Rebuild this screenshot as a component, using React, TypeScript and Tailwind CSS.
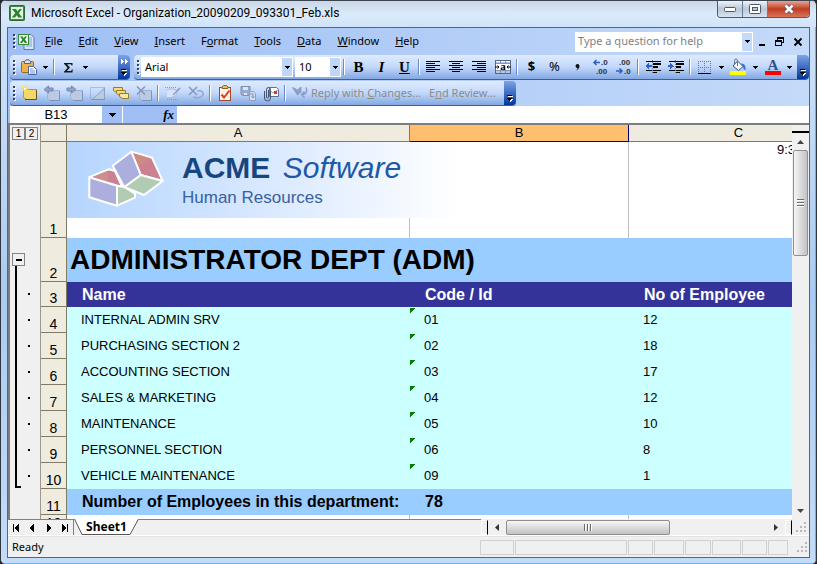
import React from "react";
import clsx from "clsx";

type IconProps = { children: React.ReactNode; w?: number; h?: number; crisp?: boolean };

const menus = [
    ["", "F", "ile"],
    ["", "E", "dit"],
    ["", "V", "iew"],
    ["", "I", "nsert"],
    ["F", "o", "rmat"],
    ["", "T", "ools"],
    ["", "D", "ata"],
    ["", "W", "indow"],
    ["", "H", "elp"],
];

const rows = [
    { n: 4, name: "INTERNAL ADMIN SRV", code: "01", count: 12 },
    { n: 5, name: "PURCHASING SECTION 2", code: "02", count: 18 },
    { n: 6, name: "ACCOUNTING SECTION", code: "03", count: 17 },
    { n: 7, name: "SALES & MARKETING", code: "04", count: 12 },
    { n: 8, name: "MAINTENANCE", code: "05", count: 10 },
    { n: 9, name: "PERSONNEL SECTION", code: "06", count: 8 },
    { n: 10, name: "VEHICLE MAINTENANCE", code: "09", count: 1 },
];

function Icon({ children, w = 16, h = 16, crisp }: IconProps) {
    return (
        <svg width={w} height={h} viewBox={`0 0 ${w} ${h}`} fill="none" shapeRendering={crisp ? "crispEdges" : "auto"} className="overflow-visible" aria-hidden="true">
            {children}
        </svg>
    );
}

function Caret({ className }: { className?: string }) {
    return (
        <svg width="5" height="3" viewBox="0 0 5 3" shapeRendering="crispEdges" className={className} aria-hidden="true">
            <path d="M0 0h5v1h-1v1h-1v1h-1v-1h-1v-1h-1z" fill="#000" />
        </svg>
    );
}

function Tool({ label, children, narrow }: { label: string; children: React.ReactNode; narrow?: boolean }) {
    return (
        <button
            type="button"
            aria-label={label}
            className={clsx("h-6 shrink-0 flex items-center justify-center hover:bg-white/40", narrow ? "w-[11px]" : "w-[23px]")}
        >
            {children}
        </button>
    );
}

function Sep() {
    return <span className="w-[2px] h-4 mx-[2px] shrink-0 bg-[#6a8ccb] border-r border-white" />;
}

function Grip() {
    return (
        <svg width="4" height="15" viewBox="0 0 4 15" shapeRendering="crispEdges" className="shrink-0" aria-hidden="true">
            {[0, 4, 8, 12].map((y) => (
                <g key={y}>
                    <rect x="1" y={y + 1} width="2" height="2" fill="#fff" />
                    <rect x="0" y={y} width="2" height="2" fill="#27417d" />
                </g>
            ))}
        </svg>
    );
}

// dark blue cap at the end of every toolbar
function BarEnd({ more }: { more?: boolean }) {
    return (
        <button
            type="button"
            aria-label="Toolbar options"
            className="w-3 self-stretch shrink-0 ml-auto flex flex-col items-center justify-between pt-1 pb-[3px] rounded-r-sm bg-linear-to-b from-[#7ba4e8] to-[#00359a]"
        >
            {more ? (
                <Icon w={7} h={5} crisp>
                    <path d="M0 0h1v1h1v1h1v1h-1v1h-1v1h-1zM4 0h1v1h1v1h1v1h-1v1h-1v1h-1z" fill="#fff" />
                </Icon>
            ) : (
                <span />
            )}
            <Icon w={6} h={7} crisp>
                <path d="M1 1h5v1h-5zM1 4h5v1h-1v1h-1v1h-1v-1h-1v-1h-1z" fill="#fff" />
                <path d="M0 0h5v1h-5zM0 3h5v1h-1v1h-1v1h-1v-1h-1v-1h-1z" fill="#000" />
            </Icon>
        </button>
    );
}

function Bar({ children, className }: { children: React.ReactNode; className?: string }) {
    return (
        <div
            className={clsx(
                "h-[25px] flex items-center pl-[3px] rounded-sm border-b border-[#3b619c] bg-linear-to-b from-[#dfebfe] via-[#c2d8fa] to-[#84a8e3]",
                className
            )}
        >
            {children}
        </div>
    );
}

function Lines({ xs }: { xs: number[][] }) {
    return (
        <Icon w={15} h={12} crisp>
            {xs.map(([x, w], i) => (
                <rect key={i} x={x} y={i * 2} width={w} height="1" fill="#000" />
            ))}
        </Icon>
    );
}

function ExcelMark() {
    return (
        <Icon>
            <rect x="0.5" y="0.5" width="15" height="15" rx="1" fill="#3c8a41" stroke="#2c6a34" />
            <rect x="2" y="2" width="12" height="12" fill="#e3f3df" />
            <path d="M3 4h4l1.500 2.300L10.500 4H13L9.800 8l3.400 4.500H9.300L7.800 10.300 6 12.500H2.800L6.300 8z" fill="#2f8136" />
        </Icon>
    );
}

function WorkbookMark() {
    return (
        <Icon w={17} h={17}>
            <path d="M6 1.500h7l3 3v12H6z" fill="#d7e5fa" stroke="#5a79b0" />
            <path d="M8 5h6M8 7h6M8 9h6M8 11h6M8 13h6" stroke="#87a3d3" />
            <rect x="0.500" y="1.500" width="10" height="10" fill="#e8f6e4" stroke="#35873c" />
            <path d="M2 3.500h2.500l1.200 1.800L7 3.500h2L6.800 6.500 9.300 10H6.800L5.500 8 4 10H2l2.400-3.500z" fill="#2b7f33" />
        </Icon>
    );
}

// shaded sheet used by the greyed comment buttons
function Note({ children }: { children?: React.ReactNode }) {
    return (
        <Icon>
            <path d="M3.500 5.500h12v10h-9l-3-2z" fill="#bcc9e2" stroke="#a3b2d0" />
            <path d="M6 15.500h9.500V6" stroke="#7f93ba" />
            {children}
        </Icon>
    );
}

function FileToolbar() {
    return (
        <Bar className="w-[120px]">
            <Grip />
            <Tool label="Paste">
                <Icon>
                    <rect x="0.500" y="2.500" width="12" height="11" rx="1" fill="#eeb04a" stroke="#9a6718" />
                    <path d="M3.500 4.500h6V2.500L8 .8H5L3.500 2.500z" fill="#d8dce6" stroke="#5d6679" />
                    <path d="M7.500 7.500h5l3 3v5h-8z" fill="#f4f8ff" stroke="#4a65a0" />
                    <path d="M9 10h3M9 12h5M9 14h5" stroke="#7c95c8" />
                </Icon>
            </Tool>
            <Tool label="Paste options" narrow><Caret /></Tool>
            <Sep />
            <Tool label="AutoSum">
                <Icon w={11} h={11}>
                    <path d="M1 1h8.500v2.500h-1L8 2.200H4L7 5.500 3.800 9H8.200l.6-1.500h1L9.500 10.500H1v-.8L4.600 5.800 1 1.800z" fill="#101820" />
                </Icon>
            </Tool>
            <Tool label="AutoSum options" narrow><Caret /></Tool>
            <BarEnd more />
        </Bar>
    );
}

function Picker({ label, value, className }: { label: string; value: string; className: string }) {
    return (
        <div className={clsx("relative flex h-5", className)}>
            <select aria-label={label} className="w-full h-5 pl-1 pb-px appearance-none bg-white text-[11px] leading-4" defaultValue={value}>
                <option>{value}</option>
            </select>
            <span className="absolute right-px top-px h-[18px] w-[10px] flex items-center justify-center bg-[#c0d6f8] pointer-events-none"><Caret /></span>
        </div>
    );
}

function FormatToolbar() {
    return (
        <Bar className="flex-1">
            <Grip />
            <Picker label="Font" value="Arial" className="w-[152px]" />
            <Picker label="Font size" value="10" className="w-[46px] ml-[2px]" />
            <Sep />
            <div className="flex font-['Liberation_Serif',serif] text-[15px] font-bold">
                <Tool label="Bold">B</Tool>
                <Tool label="Italic"><i>I</i></Tool>
                <Tool label="Underline"><span className="underline">U</span></Tool>
            </div>
            <Sep />
            <Tool label="Align left"><Lines xs={[[0, 14], [0, 9], [0, 14], [0, 9], [0, 14], [0, 9]]} /></Tool>
            <Tool label="Center"><Lines xs={[[0, 14], [3, 8], [0, 14], [3, 8], [0, 14], [3, 8]]} /></Tool>
            <Tool label="Align right"><Lines xs={[[0, 14], [5, 9], [0, 14], [5, 9], [0, 14], [5, 9]]} /></Tool>
            <Tool label="Merge and center">
                <Icon>
                    <rect x="0.500" y="1.500" width="15" height="13" fill="#fff" stroke="#55678a" />
                    <path d="M1 3h14v1.500H1zM1 11.500h14V14H1z" fill="#b9c6de" />
                    <path d="M1 4.500h14M1 11.500h14M5.500 2v2M10.500 2v2M5.500 12v2M10.500 12v2" stroke="#8496b8" />
                    <path d="M0 8h4M2.500 6.500 4 8 2.500 9.500M16 8h-4M13.500 6.500 12 8l1.500 1.500" stroke="#000" />
                    <text x="8" y="11" textAnchor="middle" className="font-['Liberation_Serif',serif] text-[11px] font-bold" fill="#000">a</text>
                </Icon>
            </Tool>
            <Sep />
            <div className="flex text-[13px]">
                <Tool label="Currency"><b>$</b></Tool>
                <Tool label="Percent">%</Tool>
                <Tool label="Comma">
                    <Icon w={5} h={8}><path d="M2.500 1a2 2 0 0 1 2 2C4.500 5 3 7 1 7.500c1-1 1.500-1.600 1.500-2.500A2 2 0 0 1 2.500 1z" fill="#111" /></Icon>
                </Tool>
            </div>
            <Tool label="Increase decimal">
                <Icon>
                    <path d="M7 3.500H1M3.500 1 1 3.500 3.500 6" stroke="#2a62c4" strokeWidth="1.500" />
                    <g className="font-['Liberation_Sans',sans-serif] text-[8px] font-bold" fill="#333">
                        <text x="8" y="6">.0</text>
                        <text x="3" y="15">.00</text>
                    </g>
                </Icon>
            </Tool>
            <Tool label="Decrease decimal">
                <Icon>
                    <path d="M0 12h6M3.500 9.500 6 12l-2.500 2.500" stroke="#2a62c4" strokeWidth="1.500" />
                    <g className="font-['Liberation_Sans',sans-serif] text-[8px] font-bold" fill="#333">
                        <text x="3" y="6">.00</text>
                        <text x="8" y="15">.0</text>
                    </g>
                </Icon>
            </Tool>
            <Sep />
            <Tool label="Decrease indent">
                <Icon crisp>
                    <path d="M1 2h15v1H1zM8 4h8v2H8zM8 7h5v2H8zM1 11h15v1H1zM7 13h5v1H7z" fill="#000" />
                    <path d="M0 7h1V6h1V5h1V4h1v2h3v2H4v2H3V9H2V8H1V7z" fill="#2a62c4" />
                    <path d="M7.500 1v14" stroke="#6f83a8" strokeDasharray="1 1" />
                </Icon>
            </Tool>
            <Tool label="Increase indent">
                <Icon crisp>
                    <path d="M1 2h15v1H1zM8 4h8v2H8zM8 7h5v2H8zM1 11h15v1H1zM7 13h5v1H7z" fill="#000" />
                    <path d="M6 7H5V6H4V5H3V4H2v2H0v2h2v2h1V9h1V8h1z" fill="#2a62c4" />
                    <path d="M7.500 1v14" stroke="#6f83a8" strokeDasharray="1 1" />
                </Icon>
            </Tool>
            <Sep />
            <Tool label="Borders">
                <Icon w={13} h={13} crisp>
                    <path d="M.5 0v12M6.500 0v12M12.500 0v12M0 .5h13M0 6.500h13" stroke="#62789f" strokeDasharray="1 1" />
                    <path d="M0 12h13v1H0z" fill="#000" />
                </Icon>
            </Tool>
            <Tool label="Border options" narrow><Caret /></Tool>
            <Tool label="Fill color">
                <Icon w={17}>
                    <path d="M7.500 2 13 7.500 8.500 11.500 3 7z" fill="#f2f5fb" stroke="#445575" />
                    <path d="M7.500 7V1.500a1.500 1.500 0 0 0-3 0V5" stroke="#6b7690" />
                    <path d="M11 4.500c3 0 5 2 4.500 6.500-1.500 0-2.500-2-2.500-3.500z" fill="#3a6fc8" />
                    <path d="M0 12h16v4H0z" fill="#ff0" />
                </Icon>
            </Tool>
            <Tool label="Fill color options" narrow><Caret /></Tool>
            <Tool label="Font color">
                <Icon>
                    <text x="8" y="11" textAnchor="middle" className="font-['Liberation_Serif',serif] text-[15px] font-bold" fill="#2d4f93">A</text>
                    <path d="M0 12h16v4H0z" fill="#f00" />
                </Icon>
            </Tool>
            <Tool label="Font color options" narrow><Caret /></Tool>
            <BarEnd />
        </Bar>
    );
}

function ReviewToolbar() {
    return (
        <Bar className="w-[506px]">
            <Grip />
            <Tool label="New comment">
                <Icon>
                    <path d="M2.500 4.500h13v10h-10l-3-2z" fill="#f5d66c" stroke="#b8943a" />
                    <path d="M4 14.500h11.500V5" stroke="#6a5214" />
                    <path d="M4 0v8M0 4h8M1.200 1.200l5.600 5.600M6.800 1.200 1.200 6.800" stroke="#fbe23c" />
                    <rect x="3" y="3" width="2" height="2" fill="#fffbe0" />
                </Icon>
            </Tool>
            <Tool label="Previous comment"><Note><path d="M0 4.500 4.500 1v2H9v3H4.500v2z" fill="#8fa3c9" stroke="#7388b3" /></Note></Tool>
            <Tool label="Next comment"><Note><path d="M9 4.500 4.500 1v2H0v3h4.500v2z" fill="#8fa3c9" stroke="#7388b3" /></Note></Tool>
            <Tool label="Show comment">
                <Icon>
                    <path d="M.5 13.500v-11h15" stroke="#8698bd" strokeDasharray="1 1" />
                    <path d="M14.500 3v11.500h-12z" fill="#bcc9e2" stroke="#8fa0c2" />
                    <path d="M1 14.500h14" stroke="#7f93ba" />
                </Icon>
            </Tool>
            <Tool label="Show all comments">
                <Icon>
                    <path d="M.5 2.500h9v5h-6l-3-2z" fill="#f7dd7e" stroke="#9a7a26" />
                    <path d="M3.500 5.500h9v5h-6l-3-2z" fill="#f7dd7e" stroke="#9a7a26" />
                    <path d="M6.500 8.500h9v5h-6l-3-2z" fill="#fbe8a0" stroke="#9a7a26" />
                </Icon>
            </Tool>
            <Tool label="Delete comment"><Note><path d="M1 1.500l8 8M9 1.500l-8 8" stroke="#8296bf" strokeWidth="1.500" /></Note></Tool>
            <Sep />
            <Tool label="Show ink">
                <Icon>
                    <path d="M0 2.500h12M2 14.500h12" stroke="#8698bd" strokeDasharray="1 1" />
                    <path d="M15 3 7 10l-2 .5" stroke="#8fa0c2" strokeWidth="1.500" />
                    <path d="M2 5c3-2 10-1 10 2 0 4-4 6-10 6" fill="#d8e3f5" stroke="#a5b5d4" />
                    <path d="M15 3 8 10" stroke="#8fa0c2" strokeWidth="1.500" />
                </Icon>
            </Tool>
            <Tool label="Delete ink">
                <Icon>
                    <path d="M1 2l8 8M9 2l-8 8" stroke="#8296bf" strokeWidth="1.500" />
                    <path d="M9 6c5-1 8 2 5 5-2 2-6 2-9 1" stroke="#97a8ca" strokeWidth="1.500" />
                </Icon>
            </Tool>
            <Sep />
            <Tool label="Create task">
                <Icon>
                    <rect x="2.500" y="2.500" width="11" height="13" fill="#fdf3ec" stroke="#a34a2a" />
                    <path d="M5 3.500h6V2L9.500.6h-3L5 2z" fill="#e9c26a" stroke="#8a6320" />
                    <path d="M4.500 9.500 7 12.500l5.500-7" stroke="#e13a1c" strokeWidth="2" />
                </Icon>
            </Tool>
            <Tool label="Update file">
                <Icon>
                    <path d="M1 1.500h9v9H2.500L1 9z" fill="#9aabcc" stroke="#7b8fb9" />
                    <path d="M3 2h5v3H3zM4 8h3v2H4z" fill="#dde6f6" />
                    <path d="M9.500 6.500h4l2 2v7h-6z" fill="#d3ddf0" stroke="#8fa0c2" />
                    <path d="M10 9h3v4M11.500 11.500 13 13l1.500-1.500" stroke="#7b8fb9" />
                </Icon>
            </Tool>
            <Tool label="Mail recipient">
                <Icon>
                    <path d="M6.500 2.500h7l2 2v7h-9z" fill="#fff" stroke="#5d7099" />
                    <path d="M6.500 5.500 10 8l5-3" stroke="#9aa8c4" />
                    <rect x="11" y="6" width="3" height="3" fill="#d33a22" />
                    <path d="M5.500 5v7a1 1 0 0 1-2 0V4.500a2 2 0 0 1 4 0V13a3 3 0 0 1-6 0V6" stroke="#44546f" />
                </Icon>
            </Tool>
            <Sep />
            <Tool label="Reply">
                <Icon>
                    <path d="M.5 2.500 5.500 5v5zM5.500 5 9 2v5L5.500 10z" fill="#8fa0c2" stroke="#8a9cc2" />
                    <path d="M14 2.500c2 4 0 7-4 7M12.500 6.500 9.500 9.500l3 3" stroke="#8a9cc2" strokeWidth="1.500" />
                </Icon>
            </Tool>
            <button type="button" disabled className="text-[11px] text-[#8b8b8b] whitespace-nowrap">Reply with <u>C</u>hanges...</button>
            <button type="button" disabled className="ml-2 text-[11px] text-[#8b8b8b] whitespace-nowrap">E<u>n</u>d Review...</button>
            <BarEnd />
        </Bar>
    );
}

function TitleBar() {
    return (
        <div className="h-[27px] flex items-start pl-2 bg-linear-to-b from-[#c9d6e6] via-[#dcebfb] to-[#cfe3f8] border-t border-[#3c4450]">
            <div className="h-6 flex items-center gap-[6px]">
                <ExcelMark />
                <h1 className="text-xs text-black whitespace-nowrap font-['Roboto',sans-serif]">Microsoft Excel - Organization_20090209_093301_Feb.xls</h1>
            </div>
            <div className="ml-auto mr-[6px] h-[17px] flex rounded-b-[4px] overflow-hidden border border-t-0 border-[#4c5a6c]">
                <button type="button" aria-label="Minimize" className="w-[25px] flex items-center justify-center border-r border-[#6b7a8e] bg-linear-to-b from-[#eef4fb] via-[#b9c7d8] to-[#d6e4f2]">
                    <Icon w={12} h={5}><rect x="0.500" y="0.500" width="11" height="4" rx="1" fill="#fff" stroke="#535666" /></Icon>
                </button>
                <button type="button" aria-label="Maximize" className="w-[25px] flex items-center justify-center border-r border-[#6b7a8e] bg-linear-to-b from-[#eef4fb] via-[#b9c7d8] to-[#d6e4f2]">
                    <Icon w={12} h={10}>
                        <rect x="0.500" y="0.500" width="11" height="9" rx="1" fill="#fff" stroke="#535666" />
                        <rect x="3.500" y="3.500" width="5" height="3" fill="#b9c7d8" stroke="#535666" />
                    </Icon>
                </button>
                <button type="button" aria-label="Close" className="w-[41px] flex items-center justify-center bg-linear-to-b from-[#e6a494] via-[#c03a22] to-[#d9745a]">
                    <Icon w={12} h={10}>
                        <path d="M2.500 1.500 9.500 8.500M9.500 1.500 2.500 8.500" stroke="#535666" strokeWidth="4" />
                        <path d="M2.500 1.500 9.500 8.500M9.500 1.500 2.500 8.500" stroke="#fff" strokeWidth="2.500" />
                    </Icon>
                </button>
            </div>
        </div>
    );
}

function MenuBar() {
    return (
        <div className="h-[27px] flex items-center pl-[5px]">
            <Grip />
            <span className="ml-px mr-[2px]"><WorkbookMark /></span>
            <nav className="flex">
                {menus.map(([pre, key, post]) => (
                    <button type="button" key={key + post} className="px-2 h-5 text-[11px] hover:bg-white/40">
                        {pre}<u>{key}</u>{post}
                    </button>
                ))}
            </nav>
            <div className="ml-auto flex items-center h-5 w-[178px] bg-white">
                <input aria-label="Help" placeholder="Type a question for help" className="flex-1 min-w-0 pl-[3px] text-[11px] placeholder:text-[#7f7f7f] outline-none" />
                <button type="button" aria-label="Help options" className="w-[10px] h-[18px] mr-px flex items-center justify-center bg-[#c5daf9]"><Caret /></button>
            </div>
            <div className="flex items-center gap-[10px] ml-[5px] mr-[7px]">
                <button type="button" aria-label="Minimize workbook"><Icon w={7} h={9} crisp><path d="M1 7h6v2H1z" fill="#000" /></Icon></button>
                <button type="button" aria-label="Restore workbook">
                    <Icon w={9} h={9} crisp>
                        <path d="M2 0h7v6H7V5h1V2H3v1H2zM0 3h7v6H0zM1 5v3h5V5z" fill="#000" fillRule="evenodd" />
                    </Icon>
                </button>
                <button type="button" aria-label="Close workbook"><Icon w={8} h={8}><path d="M.5.5l7 7M7.500.5l-7 7" stroke="#000" strokeWidth="1.800" /></Icon></button>
            </div>
        </div>
    );
}

function FormulaBar() {
    return (
        <div className="h-[17px] flex pl-[2px] bg-[#a0bff6] font-['Liberation_Sans',sans-serif]">
            <input aria-label="Name box" defaultValue="B13" className="w-[92px] bg-white text-center text-[13px] leading-4 outline-none" />
            <button type="button" aria-label="Names" className="w-5 flex items-center justify-center">
                <svg width="7" height="4" viewBox="0 0 7 4" shapeRendering="crispEdges" aria-hidden="true"><path d="M0 0h7v1h-1v1h-1v1h-1v1h-1v-1h-1v-1h-1v-1h-1z" fill="#000" /></svg>
            </button>
            <span className="w-px bg-white" />
            <button type="button" aria-label="Insert function" className="w-[54px] pr-[3px] text-right leading-4 font-bold italic text-[13px] font-['Liberation_Serif',serif]">fx</button>
            <input aria-label="Formula" className="flex-1 min-w-0 bg-white outline-none" />
        </div>
    );
}

function Banner() {
    return (
        <div className="w-[343px] h-[76px] relative">
            <div className="absolute inset-y-0 left-0 w-[390px] flex items-start bg-linear-to-r from-[#b5d5ff] via-[#d8e8ff] to-white">
                <svg width="80" height="62" viewBox="0 0 80 62" className="ml-[19px] mt-[7px]" aria-hidden="true">
                    <g stroke="#fff" strokeWidth="2" strokeLinejoin="round">
                        <path d="M3.300 28.300 23 20.300l6 1.700 7 15.500-5-.8z" fill="#cb8191" />
                        <path d="M5 28.500 21 22l1.500 11.500z" fill="#cc8f8c" strokeWidth="0" />
                        <path d="M31 36.700l7.300 1.300 10.700 6.700v4L31 56.700z" fill="#b2ccb3" />
                        <path d="M3.300 28.300l27.700 8.400v20L3.300 48.300z" fill="#acaede" />
                        <path d="M45.300 2.700 66 8.700l10.700 23.300L54.700 26z" fill="#cb8191" />
                        <path d="M47 4l17.500 5.200L52.500 17.500z" fill="#cd8c80" strokeWidth="0" />
                        <path d="M54.700 26l22 6L58 46 38.300 38z" fill="#b2ccb3" />
                        <path d="M26.700 16.700 45.300 2.700 54.700 26 38.300 38z" fill="#acaede" />
                    </g>
                </svg>
                <div className="ml-4 mt-2 whitespace-nowrap">
                    <p className="text-[30px] leading-9 text-[#2058a8]"><b className="text-[#17467f] mr-1">ACME</b> <i>Software</i></p>
                    <p className="text-[17px] leading-6 text-[#38619d]">Human Resources</p>
                </div>
            </div>
        </div>
    );
}

function RowHead({ children }: { children: React.ReactNode }) {
    return (
        <th scope="row" className="p-0 align-bottom font-normal text-sm leading-4 text-black bg-[#efebde] border-r border-b border-[#7f7c66]">{children}</th>
    );
}

function Grid() {
    return (
        <table className="table-fixed w-full min-w-[807px] border-separate border-spacing-0 font-['Liberation_Sans',sans-serif] text-[13px] text-black">
            <colgroup>
                <col className="w-[26px]" />
                <col className="w-[343px]" />
                <col className="w-[219px]" />
                <col />
            </colgroup>
            <thead>
                <tr className="h-[17px] leading-4 bg-[#efebde]">
                    <td className="p-0 border-r border-b border-[#7f7c66]" />
                    <th scope="col" className="p-0 font-normal border-r border-b border-[#7f7c66]">A</th>
                    <th scope="col" className="p-0 font-normal bg-[#ffbf6f] border-r border-b border-[#00007f]">B</th>
                    <th scope="col" className="p-0 font-normal border-b border-[#7f7c66]">C</th>
                </tr>
            </thead>
            <tbody>
                <tr className="h-24 bg-white align-top">
                    <RowHead>1</RowHead>
                    <td className="p-0 border-r border-[#c0c0c0]"><Banner /></td>
                    <td className="p-0 border-r border-[#c0c0c0]" />
                    <td className="p-0 pl-[148px] leading-4">9:33</td>
                </tr>
                <tr className="h-11 bg-[#99ccff]">
                    <RowHead>2</RowHead>
                    <td colSpan={3} className="p-0 pl-[3px] text-[28px] leading-10 font-bold">ADMINISTRATOR DEPT (ADM)</td>
                </tr>
                <tr className="h-[25px] bg-[#333399] text-white text-base leading-5 font-bold">
                    <RowHead>3</RowHead>
                    <td className="p-0 pl-[15px]">Name</td>
                    <td className="p-0 pl-[15px]">Code / Id</td>
                    <td className="p-0 pl-[15px]">No of Employee</td>
                </tr>
                {rows.map((r) => (
                    <tr key={r.n} className="h-[26px] bg-[#ccffff]">
                        <RowHead>{r.n}</RowHead>
                        <td className="p-0 pl-[14px]">{r.name}</td>
                        <td className="p-0">
                            <div className="relative h-[26px] pl-[14px] leading-[26px]">
                                <svg width="5" height="5" viewBox="0 0 5 5" shapeRendering="crispEdges" className="absolute left-0 top-px" aria-hidden="true"><path d="M0 0h5v1h-1v1h-1v1h-1v1h-1v1h-1z" fill="#008000" /></svg>
                                {r.code}
                            </div>
                        </td>
                        <td className="p-0 pl-[14px]">{r.count}</td>
                    </tr>
                ))}
                <tr className="h-[26px] bg-[#99ccff] text-base leading-5 font-bold">
                    <RowHead>11</RowHead>
                    <td className="p-0 pl-[15px] whitespace-nowrap">Number of Employees in this department:</td>
                    <td className="p-0 pl-[15px]">78</td>
                    <td className="p-0" />
                </tr>
                <tr className="h-[26px] bg-white">
                    <RowHead><span className="block h-[25px]">12</span></RowHead>
                    <td className="p-0 border-r border-[#c0c0c0]" />
                    <td className="p-0 border-r border-[#c0c0c0]" />
                    <td className="p-0" />
                </tr>
            </tbody>
        </table>
    );
}

function Outline() {
    return (
        <div className="w-[31px] shrink-0 flex flex-col bg-[#f0f0f0] border-r border-[#9c9a8c] pl-[2px] font-['Liberation_Sans',sans-serif]">
            <div className="flex pt-[2px] h-4 text-[10px] leading-3">
                <button type="button" className="w-[13px] h-[13px] border border-[#808080]">1</button>
                <button type="button" className="w-[13px] h-[13px] border border-[#808080]">2</button>
            </div>
            <button type="button" aria-label="Collapse group" className="mt-28 w-[13px] h-[13px] shrink-0 flex items-center justify-center border border-[#808490]">
                <span className="w-[6px] h-[2px] bg-black" />
            </button>
            <div className="flex">
                <div className="ml-[3px] w-[6px] h-[222px] border-l-2 border-b-2 border-black" />
                {/* one dot per detail row */}
                <div className="ml-[7px] mt-[15px] flex flex-col">
                    {[3, ...rows.map((r) => r.n)].map((n) => (
                        <span key={n} className="h-[26px] pt-3"><span className="block w-[2px] h-[2px] bg-black" /></span>
                    ))}
                </div>
            </div>
        </div>
    );
}

function VerticalScroll() {
    return (
        <div className="w-[17px] shrink-0 flex flex-col items-center bg-[#f0f0f0]">
            <span className="w-full h-[6px] mt-[2px] border-b-2 border-black bg-[#f0f0f0]" />
            <button type="button" aria-label="Scroll up" className="h-[17px] flex items-center"><Icon w={7} h={4}><path d="M0 4 3.500 0 7 4z" fill="#444" /></Icon></button>
            <div className="w-[15px] h-[106px] flex flex-col items-center justify-center gap-px rounded-[2px] border border-[#8f8f8f] bg-linear-to-r from-[#f6f6f6] via-[#dcdcde] to-[#c2c2c6]">
                {[0, 1, 2].map((i) => <span key={i} className="w-[7px] h-[2px] bg-[#6b6b6b] border-b border-white" />)}
            </div>
            <button type="button" aria-label="Scroll down" className="mt-auto h-[17px] flex items-center"><Icon w={7} h={4}><path d="M0 0 3.500 4 7 0z" fill="#444" /></Icon></button>
        </div>
    );
}

function SizeGrip() {
    return (
        <Icon w={10} h={10} crisp>
            <path d="M8 0h2v2H8zM4 4h2v2H4zM8 4h2v2H8zM0 8h2v2H0zM4 8h2v2H4zM8 8h2v2H8z" fill="#b8b8b8" />
        </Icon>
    );
}

function TabRow() {
    const nav = [
        ["First sheet", "M0 0h1v8H0zM5 0h1v8H5zM4 1h1v6H4zM3 2h1v4H3zM2 3h1v2H2z"],
        ["Previous sheet", "M4 0h1v8H4zM3 1h1v6H3zM2 2h1v4H2zM1 3h1v2H1z"],
        ["Next sheet", "M1 0h1v8H1zM2 1h1v6H2zM3 2h1v4H3zM4 3h1v2H4z"],
        ["Last sheet", "M0 0h1v8H0zM1 1h1v6H1zM2 2h1v4H2zM3 3h1v2H3zM5 0h1v8H5z"],
    ];
    return (
        <div className="h-[17px] flex bg-[#f0f0f0] border-b border-white">
            <div className="w-[59%] flex">
                <div className="w-[66px] flex border-t border-r border-[#808080]">
                    {nav.map(([label, d]) => (
                        <button type="button" key={label} aria-label={label} className="flex-1 flex items-center justify-center">
                            <Icon w={6} h={8} crisp><path d={d} fill="#000" /></Icon>
                        </button>
                    ))}
                </div>
                <button type="button" className="relative w-[65px] h-4 text-xs leading-4 font-bold">
                    <svg width="65" height="16" viewBox="0 0 65 16" className="absolute inset-0" aria-hidden="true">
                        <path d="M0 0l8 15.500h48L64.500 0z" fill="#fff" />
                        <path d="M.5 0l7.500 15.500h48L64.500 0" fill="none" stroke="#555" />
                    </svg>
                    <span className="relative">Sheet1</span>
                </button>
                <span className="flex-1 border-t border-[#808080]" />
            </div>
            <div className="flex-1 flex items-center">
                <span className="w-[7px] h-[15px] bg-[#f0f0f0] border border-white border-r-black" />
                <button type="button" aria-label="Scroll left" className="w-[18px] flex justify-center"><Icon w={4} h={7}><path d="M4 0 0 3.500 4 7z" fill="#333" /></Icon></button>
                <div className="w-1/2 h-[15px] flex items-center justify-center gap-px rounded-[2px] border border-[#8f8f8f] bg-linear-to-b from-[#f6f6f6] via-[#dcdcde] to-[#c2c2c6]">
                    {[0, 1, 2].map((i) => <span key={i} className="w-[2px] h-[7px] bg-[#6b6b6b] border-r border-white" />)}
                </div>
                <button type="button" aria-label="Scroll right" className="ml-auto w-[18px] flex justify-center"><Icon w={4} h={7}><path d="M0 0 4 3.500 0 7z" fill="#333" /></Icon></button>
                <span className="w-[7px] h-[15px] bg-[#f0f0f0] border border-white border-r-black" />
                <span className="w-[17px] flex justify-center"><SizeGrip /></span>
            </div>
        </div>
    );
}

function StatusBar() {
    const box = "h-[15px] border border-[#d0d0d0]";
    return (
        <div className="h-[21px] flex items-center bg-[#f0f0f0] pl-1 pr-[2px] border-t border-[#e3e3e3]">
            <p className="text-[11px]">Ready</p>
            <div className="ml-auto flex gap-px">
                <span className={clsx(box, "w-[34px]")} />
                <span className={clsx(box, "w-[112px]")} />
                <span className={clsx(box, "w-[25px]")} />
                <span className={clsx(box, "w-[30px]")} />
                <span className={clsx(box, "w-[26px]")} />
                <span className={clsx(box, "w-[29px]")} />
                <span className={clsx(box, "w-[25px]")} />
                <span className={clsx(box, "w-[20px]")} />
            </div>
            <span className="w-[19px] flex justify-end"><SizeGrip /></span>
        </div>
    );
}

export default function App() {
    return (
        <div className="bg-[#23282f] font-['Noto_Sans',sans-serif] text-black">
            <div className="rounded-t-md rounded-b-md overflow-hidden border-l border-r border-b border-[#30363e] bg-[#c3dcf8]">
                <TitleBar />
                <div className="border-b border-[#35cdf5] border-r pb-[5px] pl-[6px] pr-[5px] bg-linear-to-b from-[#cfe3f8] via-[#a9cbf3] to-[#c3dcfa]">
                    <div className="border border-[#5c6673]">
                        <div className="bg-linear-to-r from-[#9ebef5] to-[#c4daf9]">
                            <MenuBar />
                            <div className="flex gap-1 pl-[2px]">
                                <FileToolbar />
                                <FormatToolbar />
                            </div>
                            <div className="pt-px pl-[2px]">
                                <ReviewToolbar />
                            </div>
                        </div>
                        <FormulaBar />
                        <div className="h-[396px] flex overflow-hidden border-t-2 border-l-2 border-[#7d7d7d] bg-white">
                            <Outline />
                            <div className="flex-1 min-w-0 overflow-hidden">
                                <Grid />
                            </div>
                            <VerticalScroll />
                        </div>
                        <TabRow />
                        <StatusBar />
                    </div>
                </div>
            </div>
        </div>
    );
}
